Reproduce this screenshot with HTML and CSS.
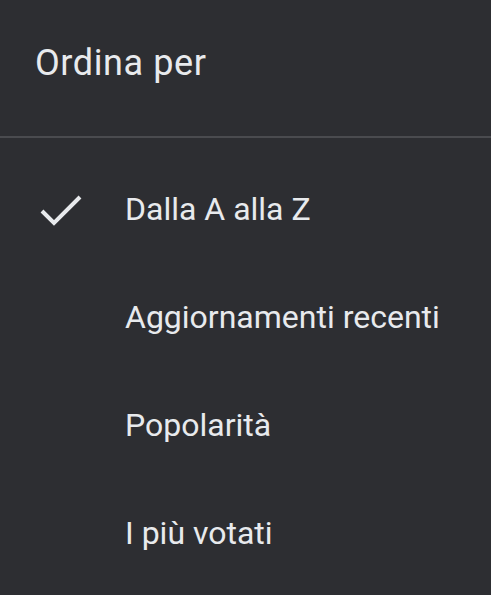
FILE: index.html
```html
<!DOCTYPE html>
<html lang="it">
<head>
  <meta charset="UTF-8">
  <meta name="viewport" content="width=device-width, initial-scale=1.0">
  <title>Ordina per</title>
  <link rel="stylesheet" href="styles.css">
</head>
<body>

  <!-- Sort menu -->
  <div class="sort-menu">
    <div class="sort-title">Ordina per</div>
    <div class="sort-divider"></div>
    <ul class="sort-list">
      <li class="sort-item selected">
        <span class="check">
          <svg width="48" height="48" viewBox="0 0 48 48">
            <polyline points="5,26 17,38 43,12" fill="none" stroke="#e8eaed" stroke-width="4"/>
          </svg>
        </span>
        <span class="label">Dalla A alla Z</span>
      </li>
      <li class="sort-item">
        <span class="check"></span>
        <span class="label">Aggiornamenti recenti</span>
      </li>
      <li class="sort-item">
        <span class="check"></span>
        <span class="label">Popolarità</span>
      </li>
      <li class="sort-item">
        <span class="check"></span>
        <span class="label">I più votati</span>
      </li>
    </ul>
  </div>

</body>
</html>
```

FILE: styles.css
```css
body {
  margin: 0;
  padding: 0;
  background-color: #2d2e32;
  font-family: Roboto, "Noto Sans", sans-serif;
  color: #e8eaed;
}

.sort-menu {
  width: 491px;
  height: 595px;
  background-color: #2d2e32;
  overflow: hidden;
}

.sort-title {
  height: 136px;
  box-sizing: border-box;
  padding: 40px 0 0 35px;
  font-size: 36px;
  line-height: 46px;
  letter-spacing: 0.6px;
}

.sort-divider {
  height: 2px;
  background-color: #4a4b4f;
}

.sort-list {
  list-style: none;
  margin: 0;
  padding: 17px 0 0 0;
}

.sort-item {
  display: flex;
  align-items: center;
  height: 108px;
}

.check {
  width: 48px;
  height: 48px;
  margin-left: 37px;
  margin-right: 40px;
}

.check svg {
  display: block;
}

.label {
  font-size: 32px;
}
```
